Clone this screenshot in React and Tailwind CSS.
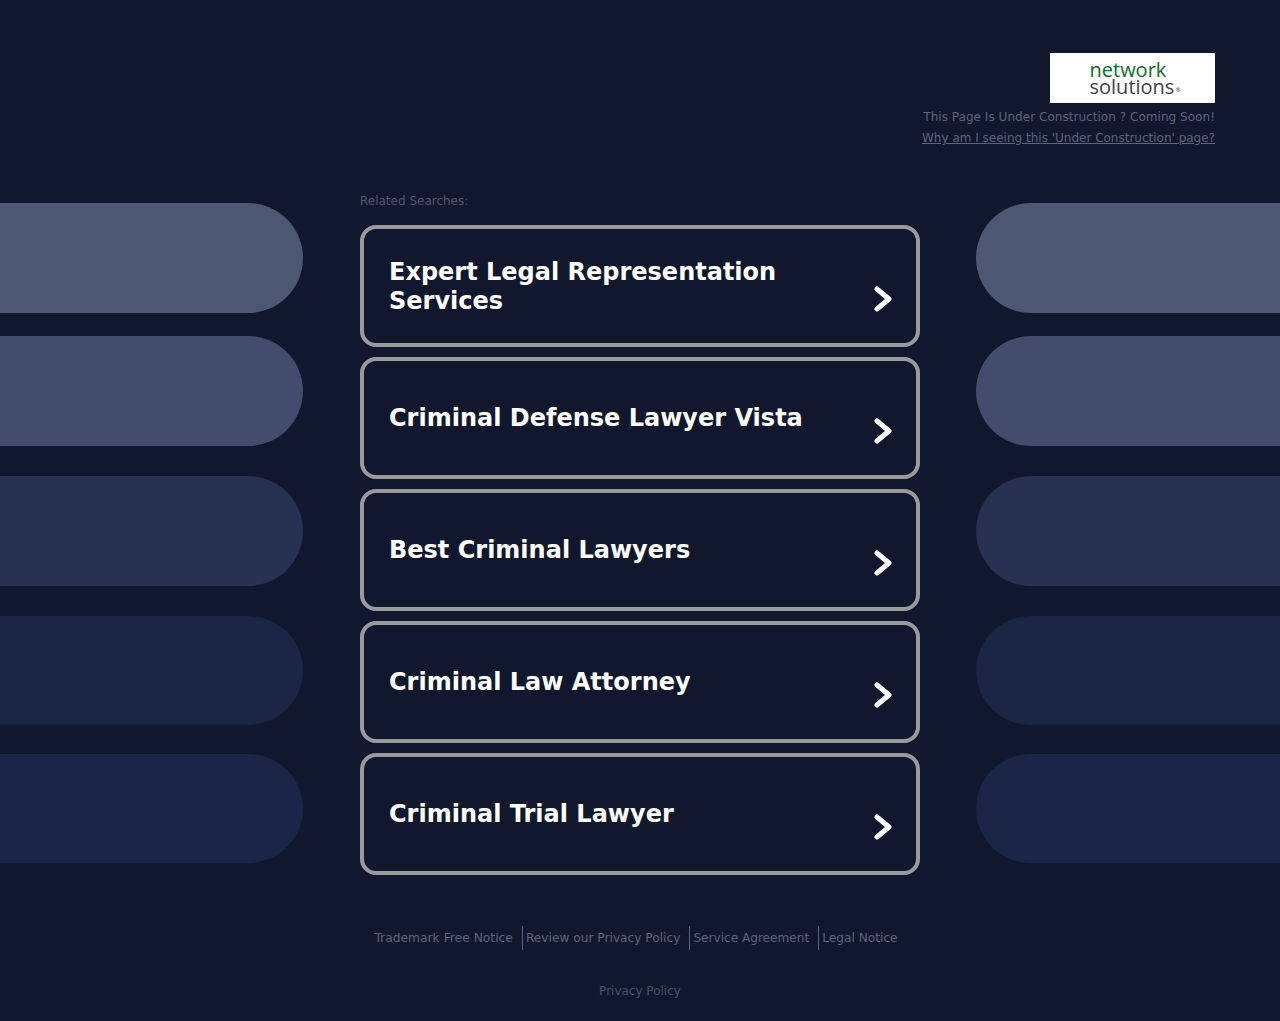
import React from "react";

const searches = [
  "Expert Legal Representation Services",
  "Criminal Defense Lawyer Vista",
  "Best Criminal Lawyers",
  "Criminal Law Attorney",
  "Criminal Trial Lawyer",
];

const pills = [
  { color: "bg-[#4d5673]", size: "h-[110px] mt-[13px]" },
  { color: "bg-[#434c6c]", size: "h-[110px] mt-[23px]" },
  { color: "bg-[#283152]", size: "h-[110px] mt-[30px]" },
  { color: "bg-[#1b2546]", size: "h-[109px] mt-[30px]" },
  { color: "bg-[#1a2547]", size: "h-[109px] mt-[29px]" },
];

const footerLinks = [
  { label: "Trademark Free Notice", size: "text-[12.3px] border-r" },
  { label: "Review our Privacy Policy", size: "text-[12.2px] border-r" },
  { label: "Service Agreement", size: "text-[12.1px] border-r" },
  { label: "Legal Notice", size: "text-[12.2px]" },
];

const Chevron = () => (
  <svg width="18" height="26" viewBox="0 0 18 26" fill="none" className="mt-[26px] shrink-0">
    <path d="M3 3 L15 13 L3 23" stroke="#ffffff" strokeWidth="5" strokeLinecap="round" strokeLinejoin="round" />
  </svg>
);

const App = () => {
  return (
    <div className="h-[1021px] overflow-hidden bg-[#11182e] font-['DejaVu_Sans',sans-serif]">
      <header className="flex flex-col items-end pr-[65px] pt-[53px]">
        <div className="flex h-[50px] w-[165px] flex-col items-center justify-center bg-white pl-[4px] font-['Open_Sans',sans-serif] leading-[17px]">
          <span className="w-[90px] text-[20px] text-[#0f6b2a]">network</span>
          <span className="w-[90px] text-[20px] text-[#3f4144]">
            solutions<span className="ml-[1px] align-[2px] text-[6px] leading-none">®</span>
          </span>
        </div>
        <p className="mt-[5px] text-[12.08px] leading-[18px] text-[#5d647b]">This Page Is Under Construction ? Coming Soon!</p>
        <a href="#" className="mt-[3px] text-[12px] leading-[18px] text-[#5d647b] underline">
          Why am I seeing this 'Under Construction' page?
        </a>
      </header>

      <main className="mt-[43px] grid grid-cols-[1fr_560px_1fr]">
        <div className="flex flex-col pr-[57px]">
          {pills.map((pill) => (
            <div key={pill.color} className={`rounded-r-[55px] ${pill.color} ${pill.size}`} />
          ))}
        </div>

        <div>
          <p className="pt-[1px] text-[12px] leading-[20px] text-[#4f566d]">Related Searches:</p>
          <div className="mt-[14px] flex flex-col gap-[10px]">
            {searches.map((title) => (
              <a
                key={title}
                href="#"
                className="flex h-[122px] items-center justify-between rounded-[16px] border-4 border-[#9a9a9c] pl-[25px] pr-[24px]"
              >
                <span className="w-[430px] pt-[1px] text-[24px] font-bold leading-[28.8px] text-white">{title}</span>
                <Chevron />
              </a>
            ))}
          </div>
        </div>

        <div className="flex flex-col pl-[56px]">
          {pills.map((pill) => (
            <div key={pill.color} className={`rounded-l-[55px] ${pill.color} ${pill.size}`} />
          ))}
        </div>
      </main>

      <footer className="mt-[51px] flex flex-col items-center">
        <div className="mr-[2px] flex">
          {footerLinks.map((link) => (
            <a
              key={link.label}
              href="#"
              className={`flex h-[24px] items-center border-[#5d647b] pl-[3px] pr-[9px] text-[#5d647b] ${link.size}`}
            >
              {link.label}
            </a>
          ))}
        </div>
        <a href="#" className="mt-[32px] text-[12px] leading-[18px] text-[#4a5168]">Privacy Policy</a>
      </footer>
    </div>
  );
};

export default App;
